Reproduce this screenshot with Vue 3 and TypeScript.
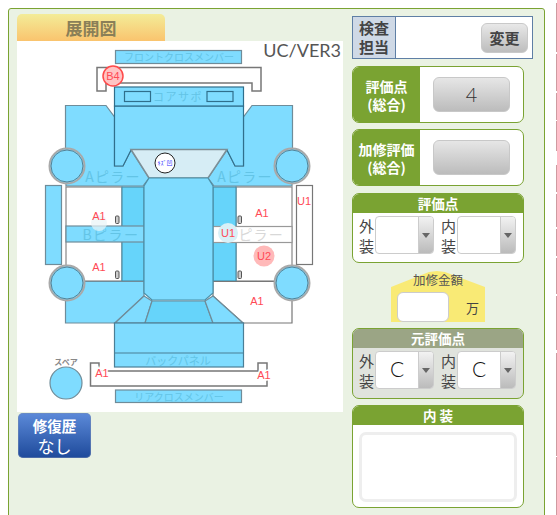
<script setup lang="ts">
const smalls = [[115.5, 216], [238, 216], [115.5, 271], [238, 271]];
const wheels = [[67, 166], [292, 166], [67, 283], [292, 283]];
const labels = [
  { t: 'A1', x: 99, y: 220 }, { t: 'U1', x: 304, y: 205 }, { t: 'A1', x: 262, y: 217 },
  { t: 'U1', x: 228, y: 237 }, { t: 'U2', x: 264, y: 260 }, { t: 'A1', x: 99, y: 271 },
  { t: 'A1', x: 257, y: 305 },
];
const edge = [
  [3, 52], [54, 91], [93, 120], [121, 151], [165, 192], [194, 227],
  [229, 256], [258, 294], [296, 350], [353, 456], [457, 515],
];
</script>

<template>
  <div class="page">
    <div class="panel">
      <div class="left">
        <div class="tab">展開図</div>
        <svg class="map" viewBox="17 41 326 371" width="326" height="371">
          <g stroke="#6f8c99" stroke-width="1.2" fill="#7fdcff">
            <rect x="115.5" y="50.5" width="126" height="13" />
            <path d="M97 67.5H261V91H252V83H106V91H97Z" fill="#fff" stroke="#777" stroke-width="1.5" />
            <path d="M65.5 105.5H106L114.5 117V166H123L131 150L149 178L143 186H66L65.5 150Z" />
            <path d="M292.5 105.5H252L243.5 117V166H235L227 150L208 178L214 186H292L292.5 150Z" />
            <path d="M114.5 106H243.5V166H235L227 150H131L123 166H114.5Z" stroke="#2f6f8c" />
            <rect x="114.5" y="87" width="129" height="19" stroke="#2f6f8c" />
            <rect x="124.5" y="91.5" width="26" height="10" stroke="#2f6f8c" />
            <rect x="207" y="91.5" width="26" height="10" stroke="#2f6f8c" />
            <path d="M131 149.5H227L208 178H149Z" fill="#d6edf5" stroke="#7b8f97" stroke-width="1.5" />
            <rect x="45.5" y="185.5" width="16" height="79" />
            <rect x="296.5" y="185.5" width="16" height="79" fill="#fff" stroke="#777" />
            <rect x="66" y="187" width="56" height="94" fill="#fff" stroke="#888" />
            <rect x="236" y="187" width="56" height="94" fill="#fff" stroke="#888" />
            <rect x="122" y="187" width="22" height="94" fill="#66d4fa" stroke="#4b8fa8" />
            <rect x="213" y="187" width="23" height="94" fill="#66d4fa" stroke="#4b8fa8" />
            <rect x="66" y="226" width="78" height="16" />
            <rect x="213" y="226.5" width="79" height="16" fill="#fff" stroke="#999" />
            <path d="M66 281.5H144V296L115 323H65.5V300Z" />
            <path d="M213 281.5H292V323H243L213 296Z" fill="#fff" stroke="#777" />
            <path d="M144 296L152 301L145 323H115Z" />
            <path d="M152 301H205L213 323H145Z" fill="#66d4fa" />
            <path d="M205 301L213 296L243 323H213Z" />
            <path d="M149 178H208L213 186V293L205 300H152L144 293V186Z" stroke="#4b8fa8" />
            <rect x="114.5" y="323" width="129" height="44" stroke="#4b7f96" />
            <path d="M114.5 353H243.5" stroke="#4b7f96" />
            <path d="M90.5 363H99V371H258V363H267V386H90.5Z" fill="#fff" stroke="#777" stroke-width="1.5" />
            <rect x="115.5" y="390" width="126" height="12.5" />
          </g>
          <g fill="#63c4e6" class="faint">
            <text x="179" y="61" font-size="10">フロントクロスメンバー</text>
            <text x="178" y="101" font-size="11" letter-spacing="1.5">コアサポ</text>
            <text x="113" y="182" font-size="14" letter-spacing="1.2">Aピラー</text>
            <text x="245" y="182" font-size="14" letter-spacing="1.2">Aピラー</text>
            <text x="111" y="240" font-size="14" letter-spacing="1.5">Bピラー</text>
            <text x="178" y="365" font-size="11">バックパネル</text>
            <text x="179" y="401" font-size="10">リアクロスメンバー</text>
            <text x="256" y="240" font-size="14" letter-spacing="1.2" fill="#d8d8d8">Bピラー</text>
          </g>
          <g v-for="(c, i) in wheels" :key="i">
            <circle :cx="c[0]" :cy="c[1]" r="17.5" fill="#7fdcff" stroke="#a9a9a9" stroke-width="2" />
            <circle :cx="c[0]" :cy="c[1]" r="16" fill="none" stroke="#4a6a78" stroke-width="0.8" />
          </g>
          <circle cx="66" cy="383" r="16" fill="#7fdcff" stroke="#6f8c99" stroke-width="1.2" />
          <text x="66" y="365" font-size="8" fill="#888" class="faint" font-weight="700">スペア</text>
          <rect v-for="(s, i) in smalls" :key="'s' + i" :x="s[0]" :y="s[1]" width="3.5" height="7.5" rx="1" fill="#ccc" stroke="#555" />
          <circle cx="113" cy="76" r="10" fill="#ffc4c4" stroke="#ff4a4a" stroke-width="1.5" />
          <circle cx="99" cy="223" r="8" fill="#e8f3f6" opacity="0.7" />
          <circle cx="228" cy="233" r="10" fill="#d9f0f7" />
          <circle cx="264" cy="256" r="10.5" fill="#ffb9b9" />
          <circle cx="165" cy="163" r="10" fill="#fff" stroke="#222" stroke-width="1" />
          <text x="165" y="165" font-size="6" fill="#33f" class="mark">ｷｽﾞ凹</text>
          <text x="113" y="80" class="mark red" font-size="11">B4</text>
          <text v-for="(l, i) in labels" :key="'l' + i" :x="l.x" :y="l.y" class="mark red" font-size="11">{{ l.t }}</text>
          <text x="102" y="377" class="mark red halo" font-size="11">A1</text>
          <text x="264" y="379" class="mark red halo" font-size="11">A1</text>
          <text x="341" y="57" class="ver">UC/VER3</text>
        </svg>
        <div class="history"><b>修復歴</b><span>なし</span></div>
      </div>

      <div class="right">
        <div class="inspect">
          <div class="inspect-label">検査<br />担当</div>
          <div class="inspect-body"><button class="change">変更</button></div>
        </div>

        <div class="score">
          <div class="score-label">評価点<br />(総合)</div>
          <div class="score-body"><div class="big-btn">4</div></div>
        </div>
        <div class="score">
          <div class="score-label">加修評価<br />(総合)</div>
          <div class="score-body"><div class="big-btn"></div></div>
        </div>

        <div class="section first">
          <div class="sec-head">評価点</div>
          <div class="sec-body">
            <div class="pair"><span class="lab">外装</span><div class="select"><span class="val"></span><span class="arrow"></span></div></div>
            <div class="pair"><span class="lab">内装</span><div class="select"><span class="val"></span><span class="arrow"></span></div></div>
          </div>
        </div>

        <div class="amount">
          <div class="amount-title">加修金額</div>
          <div class="amount-row"><div class="amount-input"></div><span>万</span></div>
        </div>

        <div class="section gray">
          <div class="sec-head">元評価点</div>
          <div class="sec-body">
            <div class="pair"><span class="lab">外装</span><div class="select"><span class="val">C</span><span class="arrow"></span></div></div>
            <div class="pair"><span class="lab">内装</span><div class="select"><span class="val">C</span><span class="arrow"></span></div></div>
          </div>
        </div>

        <div class="section interior">
          <div class="sec-head">内 装</div>
          <div class="int-body"><div class="area"></div></div>
        </div>
      </div>
    </div>
    <i
      v-for="(e, i) in edge"
      :key="i"
      class="edge"
      :style="{ top: e[0] + 'px', height: e[1] - e[0] + 'px' }"
    ></i>
  </div>
</template>

<style>
html, body { margin: 0; background: #fff; overflow: hidden; }
</style>

<style scoped>
.page { position: relative; height: 515px; overflow: hidden; padding-top: 8px; box-sizing: border-box; }
.edge { position: absolute; left: 556px; width: 1px; background: #cf9aa0; }
.panel {
  position: relative; box-sizing: border-box; margin: 0 0 0 8px; width: 537px; height: 560px;
  background: #eaf2e3; border: 1px solid #7aa332; border-radius: 3px; display: flex;
  padding: 5px 0 0 8px; font-family: "Noto Sans CJK JP", "Liberation Sans", sans-serif; color: #444;
}
.left { width: 335px; flex: none; }
.tab {
  width: 148px; height: 27px; box-sizing: border-box; border-radius: 5px 5px 0 0; text-align: center;
  background: linear-gradient(#f3ec98, #fac46e); color: #8a7f58; font-weight: 700; font-size: 17px; line-height: 28px;
}
.map { display: block; background: #fff; }
.faint { text-anchor: middle; font-family: "Noto Sans CJK JP", sans-serif; }
.mark { text-anchor: middle; font-family: "Liberation Sans", "Noto Sans CJK JP", sans-serif; }
.red { fill: #ff4a55; }
.halo { stroke: #fff; stroke-width: 3px; paint-order: stroke; }
.ver { text-anchor: end; font: 18px "Lato", sans-serif; fill: #555; }
.history {
  margin: 1px 0 0 1px; width: 73px; height: 45px; border-radius: 5px; color: #fff; text-align: center;
  background: linear-gradient(#5c8ad9, #1e4a9b); display: flex; flex-direction: column; align-items: center;
  box-shadow: inset 0 0 0 1px rgba(120, 140, 180, .5);
}
.history b { font-size: 14.5px; line-height: 18px; margin-top: 4px; }
.history span { font-size: 17px; line-height: 21px; }
.right { width: 181px; padding-top: 2px; display: flex; flex-direction: column; }
.inspect { display: flex; box-sizing: border-box; width: 181px; height: 43px; border: 1px solid #5f7fa5; background: #fff; }
.inspect-label { width: 43px; box-sizing: border-box; background: #cfd9e6; border-right: 1px solid #5f7fa5; font-weight: 700; font-size: 15px; line-height: 19px; text-align: center; padding-top: 1px; color: #444; }
.inspect-body { flex: 1; display: flex; justify-content: flex-end; align-items: center; padding-right: 4px; }
.change {
  width: 47px; height: 30px; padding: 0; border: 1px solid #c9c9c9; border-radius: 6px; font: 700 15px "Noto Sans CJK JP", sans-serif; color: #444;
  background: linear-gradient(#e8e8e8, #bdbdbd);
}
.score { display: flex; box-sizing: border-box; width: 172px; height: 57px; margin-top: 6px; background: #fff; border: 1px solid #7aa332; border-radius: 7px; overflow: hidden; }
.inspect + .score { margin-top: 7px; }
.score-label { width: 67px; flex: none; background: #7aa332; color: #fff; font-weight: 700; font-size: 14px; line-height: 18px; display: flex; align-items: center; justify-content: center; text-align: center; white-space: nowrap; }
.score-body { flex: 1; display: flex; align-items: center; padding-left: 13px; }
.big-btn {
  box-sizing: border-box; width: 77px; height: 35px; border: 1px solid #c8c8c8; border-radius: 6px; text-align: center;
  background: linear-gradient(#e6e6e6, #bcbcbc); color: #333; font: 300 20px/33px "Lato", sans-serif;
}
.section { box-sizing: border-box; width: 172px; margin-top: 7px; background: #fff; border: 1px solid #7aa332; border-radius: 7px; overflow: hidden; }
.sec-head { height: 19px; background: #7aa332; color: #fff; font-weight: 700; font-size: 13.5px; line-height: 19px; text-align: center; }
.sec-body { display: flex; height: 49px; padding: 3px 0 0 6px; box-sizing: border-box; gap: 7px; }
.pair { display: flex; }
.lab { width: 16px; font-size: 15px; line-height: 20px; color: #444; }
.select { display: flex; box-sizing: border-box; width: 59px; height: 38px; border: 1px solid #ccc; border-radius: 4px; background: #fff; overflow: hidden; }
.val { flex: 1; text-align: center; font: 300 21px/34px "Lato", sans-serif; color: #111; }
.arrow { width: 14px; border-left: 1px solid #ccc; background: linear-gradient(#f2f2f2, #bbb); position: relative; }
.arrow::after { content: ""; position: absolute; left: 3px; top: 16px; border: 4px solid transparent; border-top: 5px solid #666; border-bottom: 0; }
.amount { position: relative; width: 94px; height: 51px; margin: 8px 0 6px 39px; }
.amount::before { content: ""; position: absolute; inset: 0; background: #f9ea75; clip-path: polygon(0 16px, 38px 1px, 46px 0, 54px 1px, 100% 16px, 100% 100%, 0 100%); }
.amount-title { position: relative; font-size: 12.5px; line-height: 18px; text-align: center; color: #555; }
.amount-row { position: relative; display: flex; align-items: center; margin: 3px 0 0 6px; font-size: 13px; }
.amount-input { box-sizing: border-box; width: 52px; height: 30px; background: #fff; border: 1px solid #ccc; border-radius: 6px; margin-right: 17px; }
.gray { margin-top: 0; background: #e0e3dd; height: 71px; }
.gray .sec-head { background: #9ba585; }
.interior { height: 103px; margin-top: 6px; }
.int-body { padding: 7px 6px; }
.area { box-sizing: border-box; height: 70px; border: 3px solid #eee; border-radius: 7px; }
</style>
